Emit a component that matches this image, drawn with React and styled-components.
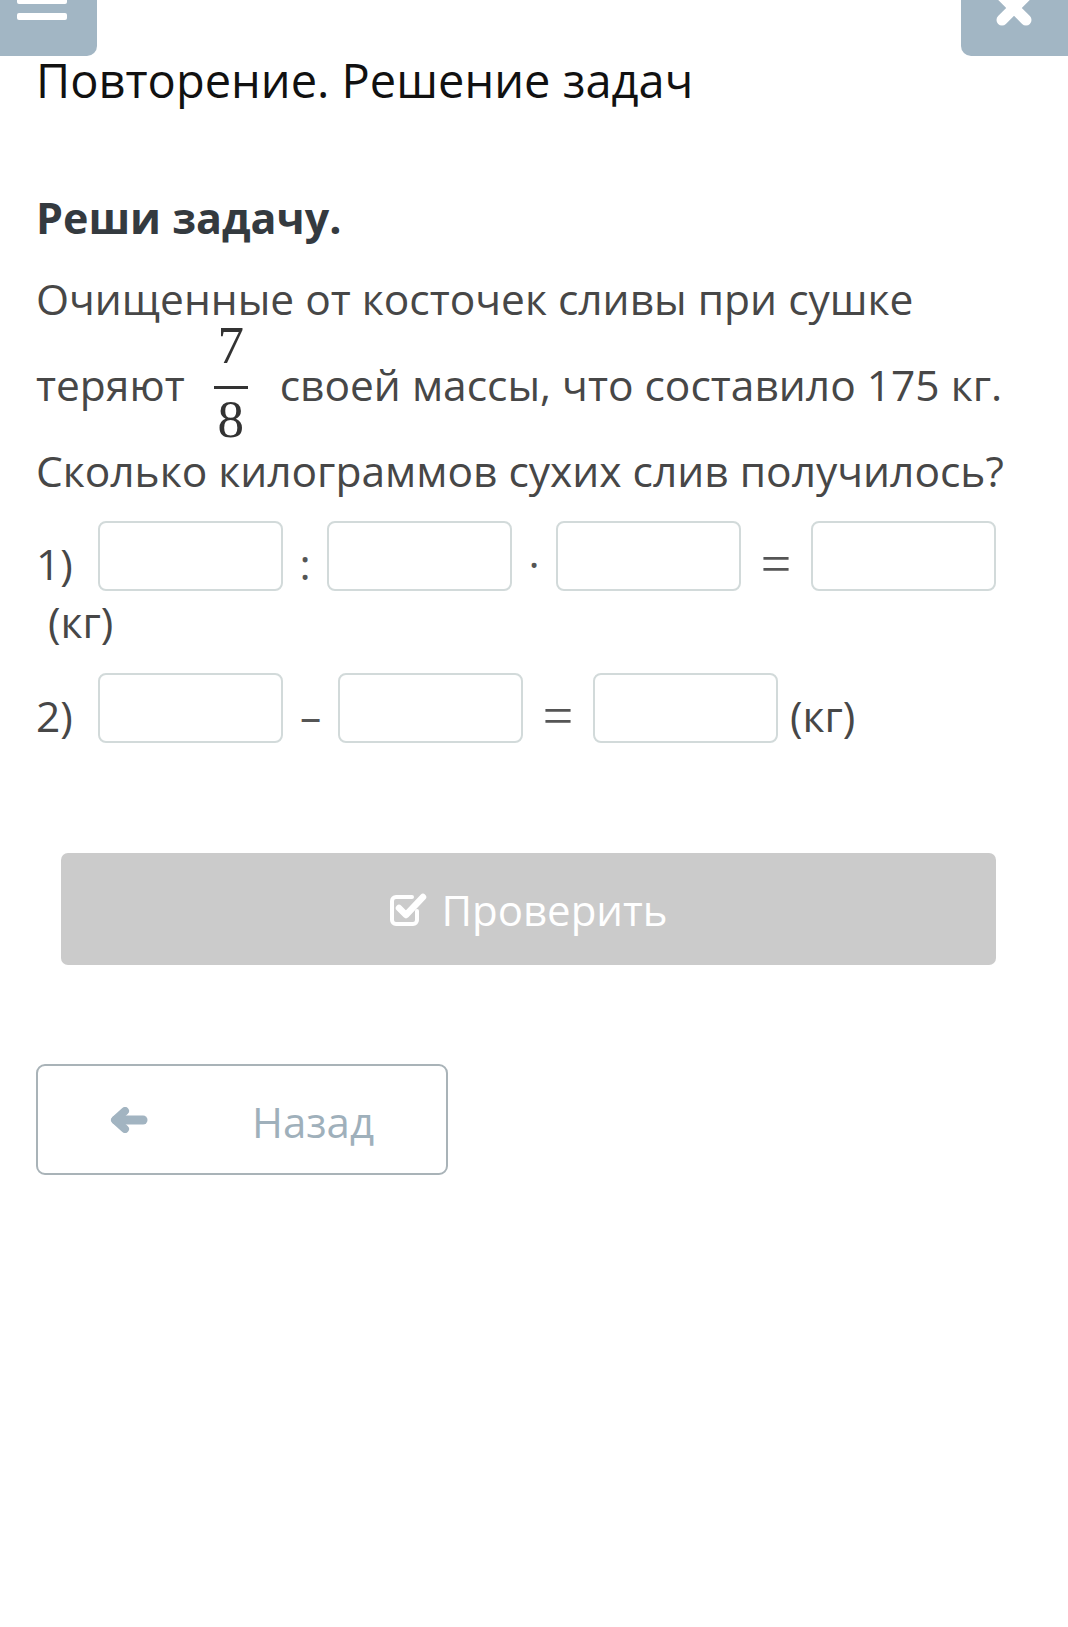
import React from "react";
import styled, { createGlobalStyle } from "styled-components";

const Global = createGlobalStyle`
  html, body { margin: 0; padding: 0; background: #ffffff; }
  body { font-family: "Open Sans", "Noto Sans", sans-serif; }
  * { box-sizing: border-box; }
`;

const Page = styled.div`
  width: 1068px;
  min-height: 1627px;
  padding: 0 47px 0 36px;
  color: #474747;
`;

const TopBar = styled.div`
  display: flex;
  justify-content: space-between;
  margin: 0 -47px 0 -36px;
  height: 56px;
`;

const Tab = styled.div`
  position: relative;
  overflow: hidden;
  width: ${(p) => p.$w}px;
  height: 56px;
  background: #a2b6c4;
  border-radius: ${(p) => (p.$side === "left" ? "0 0 10px 0" : "0 0 0 10px")};
`;

const TabIcon = styled.svg`
  position: absolute;
  left: ${(p) => p.$x}px;
  top: ${(p) => p.$y}px;
`;

const Title = styled.h1`
  margin: -4px 0 0 0;
  font-weight: 400;
  font-size: 47px;
  line-height: 56px;
  color: #111111;
`;

const Heading = styled.h2`
  margin: 80px 0 0 0;
  font-weight: 700;
  font-size: 43px;
  line-height: 60px;
  color: #343a3f;
`;

const Para = styled.p`
  margin: 8px 0 0 0;
  font-size: 42.5px;
  line-height: 86px;
  color: #474747;
`;

const Frac = styled.span`
  display: inline-flex;
  flex-direction: column;
  align-items: center;
  vertical-align: 38.5px;
  margin: -23.4px 32px -18.4px 29px;
  font-family: "Liberation Serif", "Times New Roman", serif;
  font-size: 53px;
  color: #333;
`;

const FracPart = styled.span`
  display: block;
  line-height: 53px;
`;

const FracBar = styled.span`
  display: block;
  width: 34px;
  height: 3px;
  margin: 14.4px 0 4.4px;
  background: #333;
`;

const Row = styled.div`
  display: flex;
  flex-wrap: wrap;
  align-items: center;
  margin-top: ${(p) => p.$mt}px;
  font-size: 42.5px;
  line-height: 62px;
  color: #474747;
`;

const InlineText = styled.span`
  margin-top: 8px;
  margin-bottom: -8px;
`;

const Label = styled(InlineText)`
  width: 62px;
`;

const Box = styled.input`
  width: 185px;
  height: 70px;
  border: 2px solid #d2dada;
  border-radius: 8px;
  background: #fff;
  outline: none;
  font: inherit;
  padding: 0 10px;
`;

const Op = styled(InlineText)`
  width: ${(p) => p.$w}px;
  display: flex;
  justify-content: center;
  align-items: center;
  color: #555;
  font-family: ${(p) => (p.$serif ? '"Liberation Serif", "Times New Roman", serif' : "inherit")};
  font-size: ${(p) => (p.$serif ? "54px" : "inherit")};
`;

const Unit = styled.span`
  margin-left: 12px;
  margin-top: ${(p) => (p.$wrap ? 0 : 8)}px;
  margin-bottom: ${(p) => (p.$wrap ? 0 : -8)}px;
  flex-basis: ${(p) => (p.$wrap ? "100%" : "auto")};
`;

const CheckButton = styled.button`
  display: flex;
  align-items: center;
  justify-content: center;
  gap: 14px;
  width: calc(100% - 50px);
  margin: 110px 25px 0;
  height: 112px;
  border: none;
  border-radius: 7px;
  background: #cbcbcb;
  color: #ffffff;
  font-family: "Open Sans", sans-serif;
  font-size: 42px;
  padding: 0;
`;

const BackButton = styled.button`
  display: flex;
  align-items: center;
  width: 412px;
  height: 111px;
  margin-top: 99px;
  padding: 0 0 0 72px;
  border: 2px solid #a9b3b8;
  border-radius: 9px;
  background: #fff;
  color: #9fb0bb;
  font-family: "Open Sans", sans-serif;
  font-size: 42px;
`;

const BackText = styled.span`
  margin-left: 104px;
  margin-top: 4px;
`;

export default function App() {
  return (
    <>
      <Global />
      <Page>
        <TopBar>
          <Tab $w={97} $side="left">
            <TabIcon $x={17} $y={-16} width="50" height="40" viewBox="0 0 50 40">
              <rect x="0" y="0" width="50" height="7" rx="2" fill="#fff" />
              <rect x="0" y="13" width="50" height="7" rx="2" fill="#fff" />
              <rect x="0" y="29" width="50" height="7" rx="2" fill="#fff" />
            </TabIcon>
          </Tab>
          <Tab $w={107} $side="right">
            <TabIcon $x={31} $y={-14} width="44" height="44" viewBox="0 0 44 44">
              <path d="M10 10 L34 34 M34 10 L10 34" stroke="#fff" strokeWidth="11" strokeLinecap="round" />
            </TabIcon>
          </Tab>
        </TopBar>
        <Title>Повторение. Решение задач</Title>
        <Heading>Реши задачу.</Heading>
        <Para>
          Очищенные от косточек сливы при сушке теряют
          <Frac>
            <FracPart>7</FracPart>
            <FracBar />
            <FracPart>8</FracPart>
          </Frac>
          своей массы, что составило 175 кг. Сколько килограммов сухих слив получилось?
        </Para>
        <Row $mt={7}>
          <Label>1)</Label>
          <Box />
          <Op $w={44}>:</Op>
          <Box />
          <Op $w={44}>·</Op>
          <Box />
          <Op $w={70} $serif>=</Op>
          <Box />
          <Unit $wrap>(кг)</Unit>
        </Row>
        <Row $mt={20}>
          <Label>2)</Label>
          <Box />
          <Op $w={55}>–</Op>
          <Box />
          <Op $w={70} $serif>=</Op>
          <Box />
          <Unit>(кг)</Unit>
        </Row>
        <CheckButton>
          <svg width="38" height="36" viewBox="0 0 38 36">
            <path d="M28 20 V29 A4 4 0 0 1 24 33 H7 A4 4 0 0 1 3 29 V10 A4 4 0 0 1 7 6 H23" fill="none" stroke="#fff" strokeWidth="4" strokeLinecap="round" />
            <path d="M10 17 L17 24 L34 6" fill="none" stroke="#fff" strokeWidth="6.5" strokeLinecap="round" strokeLinejoin="round" />
          </svg>
          Проверить
        </CheckButton>
        <BackButton>
          <svg width="38" height="26" viewBox="0 0 38 26">
            <path d="M15 4 L5 13 L15 22" fill="none" stroke="#a2b4c1" strokeWidth="8" strokeLinecap="round" strokeLinejoin="round" />
            <path d="M6 13 H33" fill="none" stroke="#a2b4c1" strokeWidth="9" strokeLinecap="round" />
          </svg>
          <BackText>Назад</BackText>
        </BackButton>
      </Page>
    </>
  );
}
